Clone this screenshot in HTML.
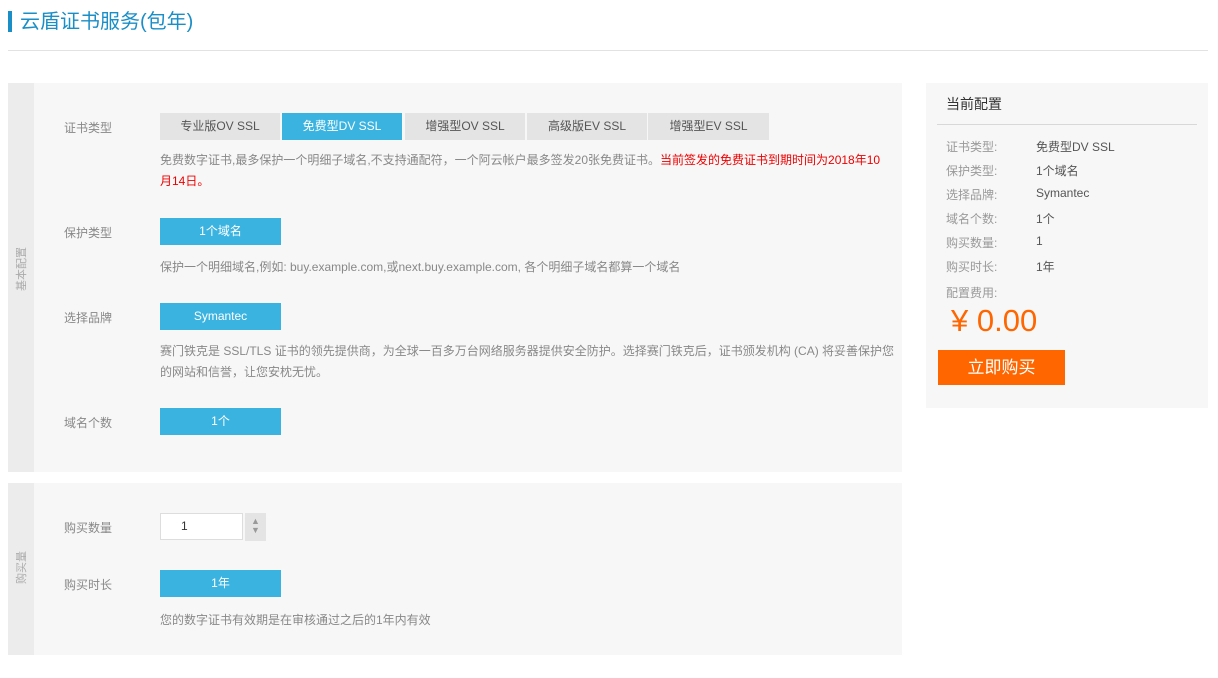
<!DOCTYPE html>
<html><head><meta charset="utf-8"><style>
*{margin:0;padding:0;box-sizing:border-box}
body{width:1218px;height:678px;background:#fff;font-family:"Liberation Sans","Noto Sans CJK SC",sans-serif;position:relative;overflow:hidden;color:#666}
.a{position:absolute;white-space:nowrap}
.t{font-size:12px;color:#888}
.lbl{font-size:12px;color:#888}
.tab{position:absolute;top:113px;height:27px;width:120px;background:#e4e4e4;color:#555;font-size:12px;text-align:center;line-height:27px}
.btn{position:absolute;left:160px;width:121px;height:27px;background:#3ab3e0;color:#fff;font-size:12px;text-align:center;line-height:27px}
.r{font-size:12px;color:#999}
.v{font-size:12px;color:#555}
</style></head><body>
<div class="a" style="left:8px;top:11px;width:4px;height:21px;background:#1a8ec6"></div>
<div class="a" style="left:20px;top:9px;font-size:20px;color:#1a8ec6;line-height:26px">云盾证书服务(包年)</div>
<div class="a" style="left:8px;top:50px;width:1200px;height:1px;background:#e2e2e2"></div>

<div class="a" style="left:8px;top:83px;width:894px;height:389px;background:#f7f7f7"></div>
<div class="a" style="left:8px;top:83px;width:26px;height:389px;background:#ececec"></div>
<div class="a" style="left:8px;top:270px;width:26px;font-size:11px;color:#aaa;transform:rotate(-90deg);text-align:center">基本配置</div>

<div class="a lbl" style="left:64px;top:119px">证书类型</div>
<div class="tab" style="left:160px">专业版OV SSL</div>
<div class="tab" style="left:282px;background:#3ab3e0;color:#fff">免费型DV SSL</div>
<div class="tab" style="left:405px">增强型OV SSL</div>
<div class="tab" style="left:527px">高级版EV SSL</div>
<div class="tab" style="left:648px;width:121px">增强型EV SSL</div>
<div class="a t" style="left:160px;top:150px;line-height:21px;white-space:normal;width:730px">免费数字证书,最多保护一个明细子域名,不支持通配符，一个阿云帐户最多签发20张免费证书。<span style="color:#e00">当前签发的免费证书到期时间为2018年10月14日。</span></div>

<div class="a lbl" style="left:64px;top:224px">保护类型</div>
<div class="btn" style="top:218px">1个域名</div>
<div class="a t" style="left:160px;top:258px">保护一个明细域名,例如: buy.example.com,或next.buy.example.com, 各个明细子域名都算一个域名</div>

<div class="a lbl" style="left:64px;top:309px">选择品牌</div>
<div class="btn" style="top:303px">Symantec</div>
<div class="a t" style="left:160px;top:341px;line-height:21px;white-space:normal;width:735px">赛门铁克是 SSL/TLS 证书的领先提供商，为全球一百多万台网络服务器提供安全防护。选择赛门铁克后，证书颁发机构 (CA) 将妥善保护您的网站和信誉，让您安枕无忧。</div>

<div class="a lbl" style="left:64px;top:414px">域名个数</div>
<div class="btn" style="top:408px">1个</div>

<div class="a" style="left:8px;top:483px;width:894px;height:172px;background:#f7f7f7"></div>
<div class="a" style="left:8px;top:483px;width:26px;height:172px;background:#ececec"></div>
<div class="a" style="left:8px;top:563px;width:26px;font-size:11px;color:#aaa;transform:rotate(-90deg);text-align:center">购买量</div>
<div class="a lbl" style="left:64px;top:519px">购买数量</div>
<div class="a" style="left:160px;top:513px;width:83px;height:27px;background:#fff;border:1px solid #ddd;font-size:12px;color:#333;padding-left:20px;line-height:25px">1</div>
<div class="a" style="left:245px;top:513px;width:21px;height:28px;background:#e4e4e4;font-size:9px;color:#999;text-align:center;line-height:9px;padding-top:4px">▲<br>▼</div>
<div class="a lbl" style="left:64px;top:576px">购买时长</div>
<div class="btn" style="top:570px">1年</div>
<div class="a t" style="left:160px;top:611px">您的数字证书有效期是在审核通过之后的1年内有效</div>

<div class="a" style="left:926px;top:83px;width:282px;height:325px;background:#f7f7f7"></div>
<div class="a" style="left:946px;top:94px;font-size:14px;color:#333">当前配置</div>
<div class="a" style="left:937px;top:124px;width:260px;height:1px;background:#d8d8d8"></div>
<div class="a r" style="left:946px;top:138px">证书类型:</div><div class="a v" style="left:1036px;top:138px">免费型DV SSL</div>
<div class="a r" style="left:946px;top:162px">保护类型:</div><div class="a v" style="left:1036px;top:162px">1个域名</div>
<div class="a r" style="left:946px;top:186px">选择品牌:</div><div class="a v" style="left:1036px;top:186px">Symantec</div>
<div class="a r" style="left:946px;top:210px">域名个数:</div><div class="a v" style="left:1036px;top:210px">1个</div>
<div class="a r" style="left:946px;top:234px">购买数量:</div><div class="a v" style="left:1036px;top:234px">1</div>
<div class="a r" style="left:946px;top:258px">购买时长:</div><div class="a v" style="left:1036px;top:258px">1年</div>
<div class="a r" style="left:946px;top:284px">配置费用:</div>
<div class="a" style="left:951px;top:303px;font-size:31px;color:#f60;line-height:36px">¥ 0.00</div>
<div class="a" style="left:938px;top:350px;width:127px;height:35px;background:#f60;color:#fff;font-size:17px;text-align:center;line-height:35px">立即购买</div>
</body></html>
